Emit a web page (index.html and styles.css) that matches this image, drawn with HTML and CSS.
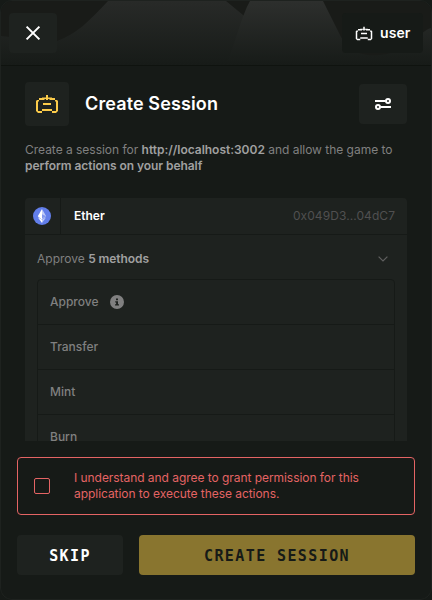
FILE: index.html
```
<!DOCTYPE html>
<html lang="en">
<head>
<meta charset="utf-8">
<title>Create Session</title>
<link rel="stylesheet" href="styles.css">
</head>
<body>
<svg class="defs" aria-hidden="true">
  <symbol id="controller" viewBox="0 0 24 20">
    <path d="M11 1h2v2.500h4V4h3v2h-5.500V5H13v1h-2V5H9.500v1H4V4h3v-.5h4zM2 6h2v1.500H3V17h4v2H3l-2-2V7zM22 6h-2v1.500h1V17h-4v2h4l2-2V7zM8 9h8v2H8zM7 15h10v2H7z" fill="currentColor"/>
  </symbol>
</svg>
<div class="modal">
  <header class="topbar">
    <svg class="cover" viewBox="0 0 430 64" preserveAspectRatio="none" aria-hidden="true">
      <defs>
        <linearGradient id="fade" x1="0" y1="0" x2="0" y2="64" gradientUnits="userSpaceOnUse">
          <stop offset="0" stop-color="#282a28"/><stop offset="1" stop-color="#171b18"/>
        </linearGradient>
        <linearGradient id="fade2" x1="0" y1="0" x2="0" y2="64" gradientUnits="userSpaceOnUse">
          <stop offset="0" stop-color="#2d2f2d"/><stop offset="1" stop-color="#171b18"/>
        </linearGradient>
      </defs>
      <path d="M0 35C24 37 43 45 56 40C76 33 88 20 107 0H225L242 14L300 64H0Z" fill="url(#fade)"/>
      <path d="M225 64C235 40 240 16 249 0H322L340 36C352 58 378 57 396 50C415 43 418 31 430 27V64Z" fill="url(#fade2)"/>
    </svg>
    <button class="close" aria-label="Close"><svg viewBox="0 0 16 16"><path d="M1.6 1.6l12.8 12.8M14.4 1.6L1.6 14.4"/></svg></button>
    <div class="user"><svg><use href="#controller"/></svg><span>user</span></div>
  </header>
  <section class="intro">
    <div class="title-row">
      <div class="logo"><svg><use href="#controller"/></svg></div>
      <h1>Create Session</h1>
      <button class="settings" aria-label="Settings"><svg viewBox="0 0 16 12"><path d="M0 3h10.500M5.500 9H16"/><circle cx="13" cy="3" r="2"/><circle cx="3" cy="9" r="2"/></svg></button>
    </div>
    <p>Create a session for <b>http://localhost:3002</b> and allow the game to <b class="tight">perform actions on your behalf</b></p>
  </section>
  <section class="contract">
    <div class="token">
      <div class="token-icon"><svg viewBox="0 0 18 18"><circle cx="9" cy="9" r="9" fill="#627eea"/><path d="M9 2v10.800L4.800 9.300z" fill="#fff"/><path d="M9 2v10.800l4.200-3.500z" fill="#c0cbf7"/><path d="M9 7.300v4.300l4.200-2.300z" fill="#8197ee"/><path d="M4.800 10.200L9 12.700V16z" fill="#fff"/><path d="M13.200 10.200L9 12.700V16z" fill="#c0cbf7"/></svg></div>
      <span class="token-name">Ether</span>
      <span class="address">0x049D3...04dC7</span>
    </div>
    <div class="summary"><span>Approve <b class="tight">5 methods</b></span><svg viewBox="0 0 10 6"><path d="M.6.6L5 5 9.400.6"/></svg></div>
    <ul>
      <li>Approve <svg viewBox="0 0 14 14"><circle cx="7" cy="7" r="7" fill="#808080"/><path d="M6 3.400h2v1.800H6zM5.200 6.200H8v3h1v1.200H5V9.200h1.100V7.400h-.9z" fill="#1e221f"/></svg></li>
      <li>Transfer</li>
      <li>Mint</li>
      <li>Burn</li>
    </ul>
  </section>
  <footer>
    <label class="consent"><span class="box"></span><span>I understand and agree to grant permission for this application to execute these actions.</span></label>
    <div class="actions"><button class="skip">SKIP</button><button class="create">CREATE SESSION</button></div>
  </footer>
</div>
</body>
</html>
```

FILE: styles.css
```
* { box-sizing: border-box; }
body { margin: 0; background: #161a17; font: 12px/16px Inter, sans-serif; color: #808080; }
button { border: 0; padding: 0; margin: 0; font: inherit; color: #fff; background: #1e221f; border-radius: 4px; display: flex; align-items: center; justify-content: center; }
svg { display: block; flex: none; }
.defs { position: absolute; width: 0; height: 0; }
.modal { height: 600px; border: 1px solid #1e221f; border-radius: 12px; overflow: hidden; display: flex; flex-direction: column; background: #161a17; }

.topbar { position: relative; height: 65px; flex: none; border-bottom: 1px solid #0f130f; background: #191b18; display: flex; justify-content: space-between; padding: 12px 8px; }
.cover { position: absolute; inset: 0; width: 100%; height: 64px; }
.close, .user { position: relative; height: 40px; }
.close { width: 48px; }
.close svg { width: 16px; height: 16px; stroke: #fff; stroke-width: 2; }
.user { width: 81px; border-radius: 4px; background: #161a17; color: #fff; display: flex; align-items: center; gap: 7px; padding-left: 13px; font-size: 14px; font-weight: 600; letter-spacing: .1px; }
.user svg { width: 18px; height: 15px; }

.intro { padding: 16px 24px 0; height: 132px; flex: none; }
.title-row { display: flex; align-items: center; height: 44px; }
.logo { width: 44px; height: 44px; border-radius: 4px; background: #1e221f; color: #fbcb4a; display: flex; align-items: center; justify-content: center; }
.logo svg { width: 24px; height: 20px; }
h1 { margin: 0 auto 0 16px; color: #fff; font-size: 18px; line-height: 24px; font-weight: 600; letter-spacing: .12px; }
.settings { width: 48px; height: 40px; }
.settings svg { width: 16px; height: 12px; fill: none; stroke: #fff; stroke-width: 2; }
.intro p { margin: 16px 0 0; letter-spacing: -.02px; }
b { font-weight: 600; color: #a0a0a0; }
.tight { letter-spacing: -.06px; }

.contract { margin: 0 24px; height: 243px; flex: none; overflow: hidden; background: #1e221f; border-radius: 4px 4px 0 0; }
.token { height: 37px; border-bottom: 1px solid #161a17; display: flex; align-items: center; }
.token-icon { width: 36px; height: 36px; border-right: 1px solid #161a17; display: flex; align-items: center; justify-content: center; padding-right: 1px; }
.token-icon svg { width: 18px; height: 18px; }
.token-name { margin-left: 13px; color: #fff; font-weight: 600; }
.address { margin-left: auto; margin-right: 12px; color: #505050; letter-spacing: .07px; }
.summary { height: 44px; padding: 4px 19px 0 12px; display: flex; justify-content: space-between; align-items: center; }
.summary svg { width: 10px; height: 6px; fill: none; stroke: #606060; stroke-width: 1.2; }
ul { list-style: none; margin: 0 12px; padding: 0; border: 1px solid #161a17; border-radius: 4px; }
li { height: 45px; padding-left: 12px; display: flex; align-items: center; gap: 11px; border-bottom: 1px solid #161a17; font-weight: 500; }
li svg { width: 14px; height: 14px; }

footer { padding: 16px; }
.consent { height: 58px; border: 1px solid #e46464; border-radius: 4px; display: flex; align-items: center; padding: 0 48px 0 16px; gap: 24px; color: #e46464; letter-spacing: -.05px; }
.box { width: 16px; height: 16px; border: 1px solid #e46464; border-radius: 2px; flex: none; }
.actions { display: flex; gap: 16px; margin-top: 20px; }
.actions button { height: 40px; padding-top: 1px; font: bold 15px "DejaVu Sans Mono", monospace; letter-spacing: 1.4px; }
.skip { width: 106px; }
.actions .create { flex: 1; background: #89752f; color: #161a17; }
```
